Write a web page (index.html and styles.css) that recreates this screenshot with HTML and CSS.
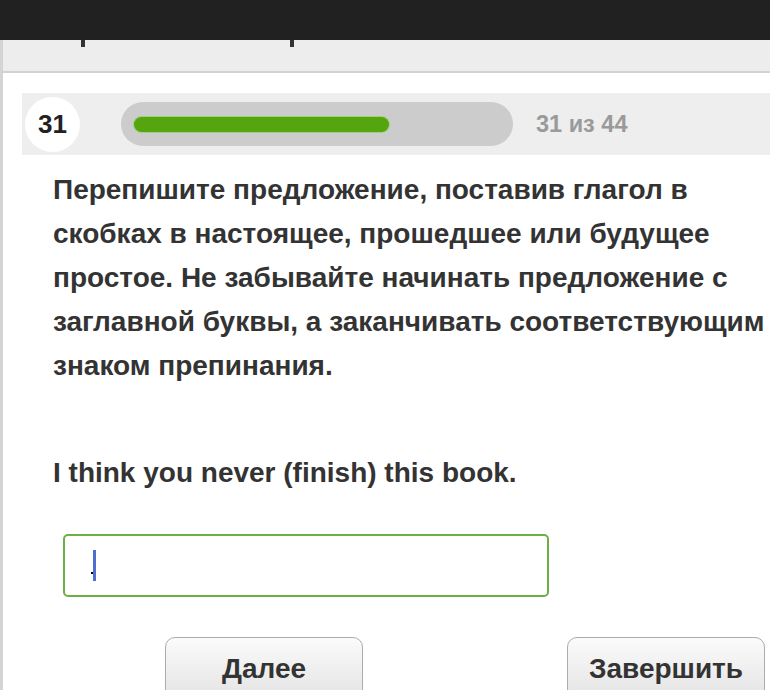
FILE: index.html
```html
<!DOCTYPE html>
<html lang="ru">
<head>
    <meta charset="UTF-8">
    <meta name="viewport" content="width=device-width, initial-scale=1.0">
    <title>Тест</title>
    <link rel="stylesheet" href="styles.css">
</head>
<body>
    <div class="topbar"></div>
    <div class="page">
        <div class="subbar">
            <span class="tick tick-first"></span>
            <span class="tick tick-second"></span>
        </div>
        <div class="content">
            <div class="progress-row">
                <div class="num-circle">31</div>
                <div class="track">
                    <div class="fill" style="width: 255px"></div>
                </div>
                <div class="counter">31 из 44</div>
            </div>

            <p class="task">Перепишите предложение, поставив глагол в скобках в настоящее, прошедшее или будущее простое. Не забывайте начинать предложение с заглавной буквы, а заканчивать соответствующим знаком препинания.</p>

            <p class="question">I think you never (finish) this book.</p>

            <div class="answer-box">
                <span class="dot"></span><span class="caret"></span>
            </div>

            <div class="buttons">
                <button class="btn btn-next">Далее</button>
                <button class="btn btn-finish">Завершить</button>
            </div>
        </div>
    </div>
</body>
</html>
```

FILE: styles.css
```css
body {
    margin: 0;
    background-color: #ffffff;
    font-family: "Liberation Sans", Arial, sans-serif;
    color: #333333;
    overflow: hidden;
}
.topbar {
    height: 40px;
    background-color: #212121;
}
.page {
    border-left: 3px solid #d4d4d4;
    min-height: 650px;
}
/* strip under the dark bar */
.subbar {
    height: 31px;
    background-color: #ededed;
    border-bottom: 2px solid #d2d2d2;
    display: flex;
    align-items: flex-start;
}
.tick {
    width: 4px;
    height: 7px;
    background-color: #333;
}
.tick-first {
    margin-left: 78px;
}
.tick-second {
    margin-left: 205px;
}
.content {
    padding-left: 19px;
}
/* progress row */
.progress-row {
    margin-top: 20px;
    height: 62px;
    background-color: #eeeeee;
    display: flex;
    align-items: center;
}
.num-circle {
    width: 55px;
    height: 55px;
    margin-left: 3px;
    border-radius: 50%;
    background-color: #ffffff;
    display: flex;
    align-items: center;
    justify-content: center;
    font-size: 26px;
    font-weight: bold;
    color: #222;
}
.track {
    margin-left: 41px;
    width: 392px;
    height: 44px;
    border-radius: 22px;
    background-color: #cccccc;
    display: flex;
    align-items: center;
    padding-left: 13px;
    box-sizing: border-box;
}
.fill {
    height: 15px;
    border-radius: 8px;
    background-color: #55a60e;
    box-shadow: 0 0 0 1px #9fcf80;
}
.counter {
    margin-left: 23px;
    font-size: 23.5px;
    font-weight: bold;
    color: #9a9a9a;
}
/* texts */
.task {
    margin: 13px 0 0 31px;
    width: 715px;
    font-size: 28px;
    font-weight: bold;
    line-height: 44px;
    color: #333;
}
.question {
    margin: 63px 0 0 31px;
    font-size: 28px;
    font-weight: bold;
    line-height: 44px;
    color: #333;
}
/* answer field */
.answer-box {
    margin: 39px 0 0 41px;
    width: 486px;
    height: 63px;
    box-sizing: border-box;
    border: 2px solid #6cb043;
    border-radius: 5px;
    background-color: #ffffff;
    display: flex;
    align-items: center;
    padding-left: 26px;
}
.dot {
    width: 2px;
    height: 2px;
    background-color: #000;
    margin-top: 14px;
}
.caret {
    width: 3px;
    height: 31px;
    background-color: #4d6fd0;
}
/* buttons */
.buttons {
    margin-top: 40px;
    display: flex;
}
.btn {
    width: 198px;
    height: 62px;
    border: 1px solid #ababab;
    border-radius: 10px;
    background: linear-gradient(#fbfbfb, #e4e4e4);
    font-family: "Liberation Sans", Arial, sans-serif;
    font-size: 28px;
    font-weight: bold;
    color: #333;
    padding-top: 2px;
}
.btn-next {
    margin-left: 143px;
}
.btn-finish {
    margin-left: 204px;
}
```
